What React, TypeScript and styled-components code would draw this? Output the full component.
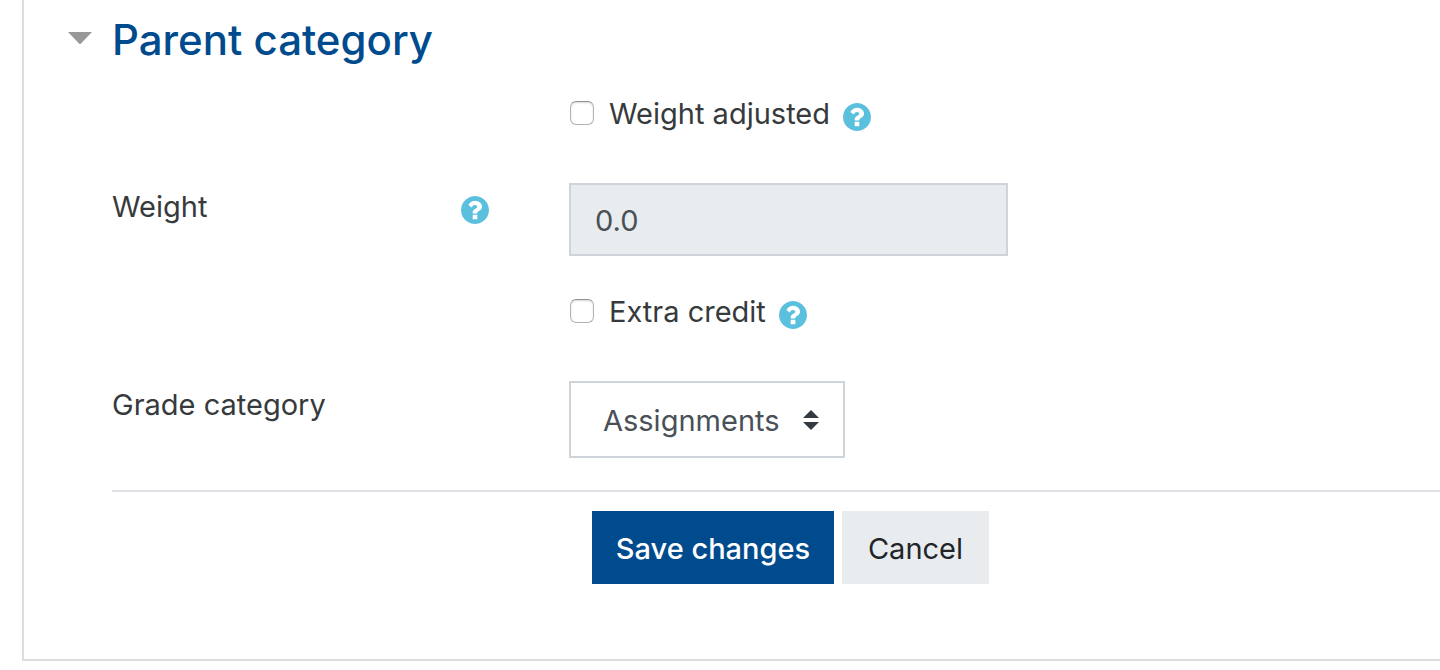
import React from "react";
import styled, { createGlobalStyle } from "styled-components";

const GlobalStyle = createGlobalStyle`
  *, *::before, *::after { box-sizing: border-box; }
  body {
    margin: 0;
    background: #fff;
    color: #373a3c;
    font-family: Inter, "Liberation Sans", sans-serif;
    font-size: 29px;
    line-height: 44px;
  }
`;

const Panel = styled.form`
  margin-left: 22px;
  padding: 0 0 75px 42px;
  border: solid #ddd;
  border-width: 0 0 2px 2px;
`;

const Header = styled.header`
  display: flex;
  align-items: center;
  height: 90px;
  padding-bottom: 10px;
`;

const Toggle = styled.button`
  display: flex;
  width: 46px;
  height: 44px;
  padding: 14px 0 0;
  border: 0;
  background: none;
  cursor: pointer;
`;

const Title = styled.h2`
  margin: 0;
  color: #004b8d;
  font-size: 42px;
  font-weight: 500;
  line-height: 54px;
  white-space: nowrap;
`;

const Body = styled.div`
  margin-left: 46px;
`;

const Row = styled.div<{ $check?: boolean }>`
  display: grid;
  grid-template-columns: 377px minmax(0, 1fr);
  column-gap: 80px;
  min-height: ${(p) => (p.$check ? 61 : 73)}px;
  margin-bottom: 32px;
`;

const LabelCell = styled.div`
  display: flex;
  justify-content: space-between;
  align-items: flex-start;
  padding-top: 2px;
`;

const Label = styled.label`
  white-space: nowrap;
`;

const CheckCell = styled.div`
  grid-column: 2;
  display: flex;
  align-items: center;
  height: 46px;

  ${Label} { padding-top: 2px; }
`;

const Checkbox = styled.input`
  appearance: none;
  flex: none;
  width: 24px;
  height: 24px;
  margin: 0 15px 0 1px;
  border: 1px solid #b4b4b4;
  border-top-color: #949494;
  border-radius: 6px;
  background: #fff;
  box-shadow: inset 0 1px 2px rgba(0, 0, 0, 0.16);

  &:checked { background: #004b8d; }
`;

const HelpButton = styled.button<{ $inline?: boolean }>`
  display: flex;
  flex: none;
  margin: ${(p) => (p.$inline ? "7px 0 0 13px" : "11px 0 0")};
  padding: 0;
  border: 0;
  background: none;
  color: #5bc0de;
  cursor: pointer;
`;

const TextInput = styled.input`
  width: 439px;
  max-width: 100%;
  height: 73px;
  padding: 2px 24px 0;
  border: 2px solid #ced4da;
  border-radius: 0;
  background: #e9ecef;
  color: #495057;
  font: inherit;
  opacity: 1;
`;

const SelectWrap = styled.div`
  display: grid;
  width: 276px;
  height: 77px;
  align-items: center;

  > * { grid-area: 1 / 1; }
  > svg { justify-self: end; margin-right: 26px; pointer-events: none; }
`;

const Select = styled.select`
  appearance: none;
  width: 100%;
  height: 100%;
  padding: 2px 58px 0 32px;
  border: 2px solid #ced4da;
  border-radius: 0;
  background: #fff;
  color: #495057;
  font: inherit;
`;

const Actions = styled.div`
  display: flex;
  gap: 8px;
  padding: 19px 0 0 480px;
  border-top: 2px solid #dee2e6;
`;

const Button = styled.button<{ $primary?: boolean }>`
  width: ${(p) => (p.$primary ? 242 : 147)}px;
  height: 73px;
  padding: 2px 0 0;
  border: 0;
  background: ${(p) => (p.$primary ? "#004b8d" : "#e9ecef")};
  color: ${(p) => (p.$primary ? "#fff" : "#212529")};
  font: inherit;
  font-weight: ${(p) => (p.$primary ? 500 : 400)};
  white-space: nowrap;
  cursor: pointer;
`;

function Help({ topic, inline }: { topic: string; inline?: boolean }) {
  return (
    <HelpButton type="button" $inline={inline} aria-label={`Help with ${topic}`}>
      <svg width="28" height="28" viewBox="128 128 1536 1536" fill="currentColor" aria-hidden="true">
        <path d="M1024 1376v-192q0-14-9-23t-23-9h-192q-14 0-23 9t-9 23v192q0 14 9 23t23 9h192q14 0 23-9t9-23zm256-672q0-88-55.5-163t-138.5-116-170-41q-243 0-371 213-15 24 8 42l132 100q7 6 19 6 16 0 25-12 53-68 86-92 34-24 86-24 48 0 85.5 26t37.500 59q0 38-20 61t-68 45q-63 28-115.500 86.500t-52.500 125.500v36q0 14 9 23t23 9h192q14 0 23-9t9-23q0-19 21.500-49.500t54.500-49.500q32-18 49-28.500t46-35 44.500-48 28-60.500 12.500-81zm384 192q0 209-103 385.500t-279.500 279.500-385.500 103-385.500-103-279.500-279.500-103-385.500 103-385.500 279.500-279.500 385.500-103 385.500 103 279.500 279.500 103 385.500z" />
      </svg>
    </HelpButton>
  );
}

function CheckRow({ id, label }: { id: string; label: string }) {
  return (
    <Row $check>
      <CheckCell>
        <Checkbox type="checkbox" id={id} />
        <Label htmlFor={id}>{label}</Label>
        <Help topic={label} inline />
      </CheckCell>
    </Row>
  );
}

export default function App() {
  return (
    <>
      <GlobalStyle />
      <Panel onSubmit={(e) => e.preventDefault()}>
        <Header>
          <Toggle type="button" aria-label="Collapse section" aria-expanded="true">
            <svg width="28" height="14" viewBox="0 0 28 14" aria-hidden="true">
              <path d="M2 0h24L15 11.500q-1 1-2 0z" fill="#999" />
            </svg>
          </Toggle>
          <Title>Parent category</Title>
        </Header>
        <Body>
          <CheckRow id="weight-adjusted" label="Weight adjusted" />
          <Row>
            <LabelCell>
              <Label htmlFor="weight">Weight</Label>
              <Help topic="Weight" />
            </LabelCell>
            <div>
              <TextInput id="weight" type="text" defaultValue="0.0" disabled />
            </div>
          </Row>
          <CheckRow id="extra-credit" label="Extra credit" />
          <Row>
            <LabelCell>
              <Label htmlFor="grade-category">Grade category</Label>
            </LabelCell>
            <SelectWrap>
              <Select id="grade-category" defaultValue="assignments">
                <option value="assignments">Assignments</option>
              </Select>
              <svg width="16" height="20" viewBox="0 0 16 20" fill="#343a40" aria-hidden="true">
                <path d="M0 8L8 0l8 8zM0 12h16l-8 8z" />
              </svg>
            </SelectWrap>
          </Row>
          <Actions>
            <Button type="submit" $primary>Save changes</Button>
            <Button type="button">Cancel</Button>
          </Actions>
        </Body>
      </Panel>
    </>
  );
}
